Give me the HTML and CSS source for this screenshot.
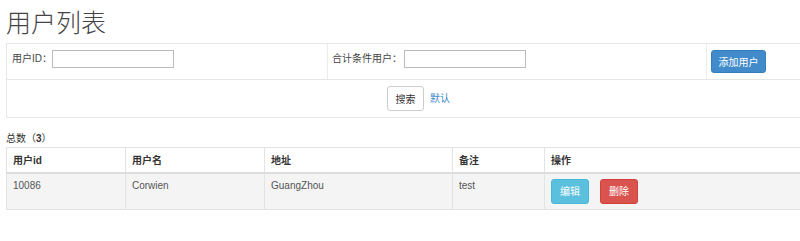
FILE: index.html
```html
<!DOCTYPE html>
<html lang="zh-CN">
<head>
<meta charset="utf-8">
<title>用户列表</title>
<link rel="stylesheet" href="styles.css">
</head>
<body>
<div class="page">
  <h1 class="title">用户列表</h1>
  <div class="filter">
    <div class="filter-row">
      <div class="cell cell-a"><label class="lbl">用户ID：</label><input class="inp" type="text"></div>
      <div class="cell cell-b"><label class="lbl">合计条件用户：</label><input class="inp" type="text"></div>
      <div class="cell cell-c"><button class="btn btn-primary">添加用户</button></div>
    </div>
    <div class="filter-actions">
      <button class="btn btn-default">搜索</button>
      <a class="link" href="#">默认</a>
    </div>
  </div>
  <div class="total">总数（<b>3</b>）</div>
  <table class="grid">
    <colgroup>
      <col class="c1"><col class="c2"><col class="c3"><col class="c4"><col class="c5">
    </colgroup>
    <thead>
      <tr><th>用户id</th><th>用户名</th><th>地址</th><th>备注</th><th>操作</th></tr>
    </thead>
    <tbody>
      <tr>
        <td>10086</td><td>Corwien</td><td>GuangZhou</td><td>test</td>
        <td class="ops"><button class="btn btn-info">编辑</button><button class="btn btn-danger">删除</button></td>
      </tr>
    </tbody>
  </table>
</div>
</body>
</html>
```
FILE: styles.css
```css
html, body {
  margin: 0;
  padding: 0;
  overflow: hidden;
  background: #fff;
}
body {
  font-family: "Liberation Sans", "Noto Sans CJK SC", sans-serif;
  font-size: 10px;
  color: #333;
}
.page {
  padding-left: 6px;
  width: 794px;
}
.title {
  margin: 0;
  height: 43px;
  line-height: 43px;
  font-size: 25px;
  font-weight: 300;
  color: #444;
  font-family: "Noto Sans CJK SC", sans-serif;
}
.filter {
  width: 795px;
  border: 1px solid #e6e6e6;
}
.filter-row {
  display: grid;
  grid-template-columns: 320px 378px 1fr;
  column-gap: 1px;
  background: #ececec;
  border-bottom: 1px solid #e6e6e6;
  height: 35px;
}
.cell {
  background: #fff;
  display: flex;
  align-items: flex-start;
  padding-top: 6px;
  box-sizing: border-box;
}
.cell-a { padding-left: 5px; }
.cell-b { padding-left: 4px; }
.cell-b .inp { margin-left: 2px; }
.cell-c { padding-left: 4px; }
.lbl {
  line-height: 18px;
  color: #444;
  font-size: 10px;
}
.inp {
  width: 122px;
  height: 18px;
  box-sizing: border-box;
  border: 1px solid #bbb;
  margin: 0;
  padding: 0 3px;
  font-size: 10px;
}
.filter-actions {
  height: 37px;
  display: flex;
  align-items: flex-start;
  padding-top: 6px;
  box-sizing: border-box;
  padding-left: 380px;
  gap: 6px;
}
.btn {
  font-family: "Noto Sans CJK SC", sans-serif;
  font-size: 10px;
  border-radius: 3px;
  border: 1px solid transparent;
  padding: 0;
  margin: 0;
  cursor: pointer;
  box-sizing: border-box;
  line-height: 1;
}
.btn-primary {
  width: 55px;
  height: 23px;
  background: #428bca;
  border-color: #357ebd;
  color: #fff;
}
.btn-default {
  width: 37px;
  height: 25px;
  background: #fff;
  border-color: #ccc;
  color: #333;
}
.link {
  color: #428bca;
  text-decoration: none;
  line-height: 25px;
  font-size: 10px;
}
.total {
  margin-top: 12px;
  line-height: 17px;
  height: 17px;
  color: #333;
}
.grid {
  width: 795px;
  border-collapse: collapse;
  table-layout: fixed;
  border: 1px solid #e3e3e3;
}
.c1 { width: 119px; }
.c2 { width: 139px; }
.c3 { width: 188px; }
.c4 { width: 92px; }
.grid th, .grid td {
  border: 1px solid #e3e3e3;
  text-align: left;
  padding: 0 6px;
  box-sizing: border-box;
}
.grid th {
  height: 25px;
  font-weight: bold;
  color: #333;
  border-bottom: 2px solid #ddd;
  vertical-align: middle;
}
.grid td {
  height: 37px;
  vertical-align: top;
  padding-top: 3px;
  color: #555;
  background: #f4f4f4;
  line-height: 17px;
}
.grid td.ops {
  padding-top: 5px;
  padding-bottom: 4px;
}
.btn-info {
  width: 38px;
  height: 25px;
  background: #5bc0de;
  border-color: #46b8da;
  color: #fff;
  margin-right: 11px;
}
.btn-danger {
  width: 38px;
  height: 25px;
  background: #d9534f;
  border-color: #d43f3a;
  color: #fff;
}
```
